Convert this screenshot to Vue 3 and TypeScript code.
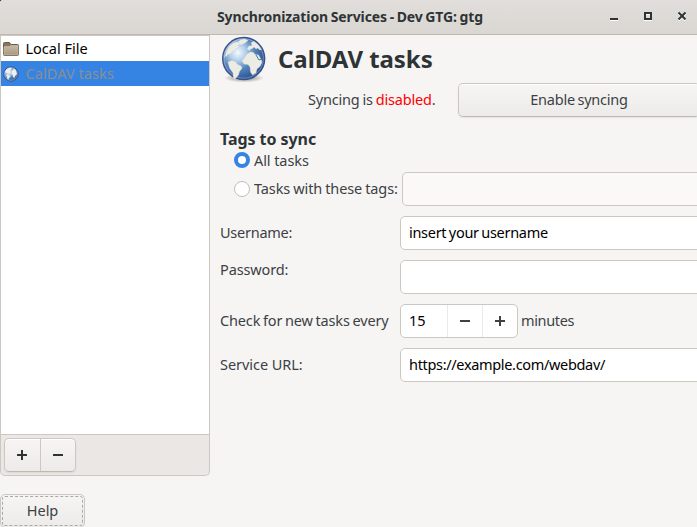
<script setup lang="ts">
import { ref } from 'vue'

type Scope = 'all' | 'tags'

const scope = ref<Scope>('all')
const tags = ref('')
const username = ref('insert your username')
const password = ref('')
const minutes = ref(15)
const serviceUrl = ref('https://example.com/webdav/')
</script>

<template>
  <svg class="defs" width="0" height="0" aria-hidden="true">
    <defs>
      <radialGradient id="ocean" cx="0.36" cy="0.36" r="0.64">
        <stop offset="0" stop-color="#f4f9fd" />
        <stop offset="0.3" stop-color="#b4cfea" />
        <stop offset="0.62" stop-color="#5584ba" />
        <stop offset="1" stop-color="#2b5795" />
      </radialGradient>
      <radialGradient id="shade">
        <stop offset="0" stop-color="#000" stop-opacity="0.5" />
        <stop offset="1" stop-color="#000" stop-opacity="0" />
      </radialGradient>
      <linearGradient id="folder" x1="0" y1="0" x2="0" y2="1">
        <stop offset="0" stop-color="#c6b9a4" />
        <stop offset="1" stop-color="#a79880" />
      </linearGradient>
      <symbol id="globe" viewBox="0 0 48 48">
        <ellipse cx="24" cy="43" rx="20" ry="4.500" fill="url(#shade)" />
        <circle cx="23.700" cy="23.500" r="21" fill="url(#ocean)" stroke="#39528c" stroke-width="1.400" />
        <g fill="#ecece4" stroke="#cfd4d3" stroke-width="0.4">
          <path d="M5.500 20l1-4 3-5 4-3 3-1 4 0 0 2-3 1.500 2 1.500-3 1-1 2.500-3 .5-2 3-3 .5-1 2-1.500-1-.5 2z" />
          <path d="M18 7l3-2.500 4-.5 3 1.500-3 2.500-4 2-1.500-1z" />
          <path d="M8 27l4-1.500 4 1.500 1 2 4 2 1.200 2-2.700 3.500-1 3.500-3.500 4-1.500-.5-.5-5.500-3.500-5z" />
          <path d="M27 14l2-3 3-.5-1-3 3-1 4 3 3.500 5-2 .5-1.500-2-2 1-2-2-1.500 1.500-2 .5-1 1.500z" />
          <path d="M25 22l2-3 3.500-2 3 .5 1.500 2 3.500.5 3 5 .5 2.500-2 4-3 2.500-1 4-3.500 2-2-3-.5-5-2-2.500-4-.5-2-3z" />
        </g>
        <path d="M36 20l3 5 3-1" fill="none" stroke="#4373ad" stroke-width="1" />
        <circle cx="23.700" cy="23.500" r="19.700" fill="none" stroke="#fff" stroke-opacity="0.3" />
      </symbol>
      <symbol id="globe-small" viewBox="0 0 16 16">
        <circle cx="8" cy="8" r="7.200" fill="url(#ocean)" stroke="#35568c" stroke-width="1" />
        <g fill="#eff0ec">
          <path d="M2 6l2-3 3-1.300 2 .8-2 1.500-1 2-2 1z" />
          <path d="M3 9l2-.5 2.500 1.700-1.200 1.600-1 2-1-1-.3-2z" />
          <path d="M9 5l2-2.500 2 2 1 3.500-1.500 1.500-1.300 2.500-1.200-1-.2-2L8.500 8z" />
        </g>
        <circle cx="8" cy="8" r="6.300" fill="none" stroke="#fff" stroke-opacity="0.45" stroke-width="0.8" />
      </symbol>
    </defs>
  </svg>

  <div class="window">
    <header class="titlebar">
      <h1>Synchronization Services - Dev GTG: gtg</h1>
      <div class="controls">
        <svg width="10" height="10" viewBox="0 0 10 10"><path d="M1 8h8v2H1z" /></svg>
        <svg width="10" height="10" viewBox="0 0 10 10"><path fill-rule="evenodd" d="M1 2h8v8H1zM3 4v4h4V4z" /></svg>
        <svg width="10" height="10" viewBox="0 0 10 10"><path class="cross" d="M1.500 2.500l7 7M8.500 2.500l-7 7" /></svg>
      </div>
    </header>

    <div class="body">
      <aside class="side">
        <ul class="backends">
          <li>
            <svg width="16" height="16" viewBox="0 0 16 16">
              <path d="M.5 13.500v-11q0-1 1-1h4.500q1 0 1.300 1l.3 1h7q.9 0 .9 1v9q0 1-1 1H1.500q-1 0-1-1z" fill="#86755d" stroke="#6d5e49" />
              <path d="M1 6.500q0-1 1-1h4.500l1-1H15v9q0 .5-.5.5h-13q-.5 0-.5-.5z" fill="url(#folder)" stroke="#d7ccba" stroke-width=".5" />
            </svg>
            <span>Local File</span>
          </li>
          <li class="selected">
            <svg width="16" height="16"><use href="#globe-small" /></svg>
            <span>CalDAV tasks</span>
          </li>
        </ul>
        <div class="toolbar">
          <div class="linked">
            <button type="button" aria-label="Add"><svg width="10" height="10" viewBox="0 0 10 10"><path d="M4 0h2v4h4v2H6v4H4V6H0V4h4z" /></svg></button>
            <button type="button" aria-label="Remove"><svg width="10" height="10" viewBox="0 0 10 10"><path d="M0 4h10v2H0z" /></svg></button>
          </div>
        </div>
        <button type="button" class="help"><span>Help</span></button>
      </aside>

      <main class="panel">
        <div class="heading">
          <svg width="48" height="48"><use href="#globe" /></svg>
          <h2>CalDAV tasks</h2>
        </div>

        <div class="status">
          <span class="state">Syncing is <em>disabled</em>.</span>
          <button type="button" class="enable">Enable syncing</button>
        </div>

        <h3>Tags to sync</h3>
        <label class="option first">
          <input v-model="scope" type="radio" value="all" />
          <span>All tasks</span>
        </label>
        <div class="option second">
          <input id="some" v-model="scope" type="radio" value="tags" />
          <label for="some">Tasks with these tags:</label>
          <input v-model="tags" class="entry" type="text" :disabled="scope === 'all'" />
        </div>

        <div class="fields">
          <label class="user">Username:</label>
          <input v-model="username" class="entry name" type="text" />
          <label class="pass">Password:</label>
          <input v-model="password" class="entry" type="password" />
          <label class="check">Check for new tasks every</label>
          <div class="period">
            <div class="spin">
              <span class="value">{{ minutes }}</span>
              <button type="button" aria-label="Less" @click="minutes--"><svg width="10" height="10" viewBox="0 0 10 10"><path d="M0 4h10v2H0z" /></svg></button>
              <button type="button" aria-label="More" @click="minutes++"><svg width="10" height="10" viewBox="0 0 10 10"><path d="M4 0h2v4h4v2H6v4H4V6H0V4h4z" /></svg></button>
            </div>
            <span class="unit">minutes</span>
          </div>
          <label class="service">Service URL:</label>
          <input v-model="serviceUrl" class="entry url" type="text" />
        </div>
      </main>
    </div>
  </div>
</template>

<style>
body {
  margin: 0;
  overflow: hidden;
  background: #f6f5f4;
}
</style>

<style scoped>
* {
  box-sizing: border-box;
}
.defs {
  position: absolute;
}
.window {
  display: flex;
  flex-direction: column;
  height: 527px;
  overflow: hidden;
  background: #f6f5f4;
  color: #3c4144;
  font-family: "Noto Sans", sans-serif;
  font-size: 14.5px;
  line-height: 20px;
  white-space: nowrap;
}
h1,
h2,
h3,
ul {
  margin: 0;
  padding: 0;
}
button,
input {
  margin: 0;
  padding: 0;
  font: inherit;
  color: inherit;
}
.titlebar {
  display: grid;
  grid-template-columns: 217px 1fr auto;
  align-items: center;
  flex: none;
  height: 35px;
  padding-right: 10px;
  border-bottom: 1px solid #bfb8b1;
  border-top-left-radius: 3px;
  background: linear-gradient(#e1dedb, #dad6d2);
  box-shadow: -3px -3px 0 3px #222;
}
.titlebar h1 {
  grid-column: 2;
  color: #2e3436;
  font-size: 14px;
  font-weight: 700;
  letter-spacing: -0.1px;
  word-spacing: -0.9px;
}
.controls {
  display: flex;
  gap: 24px;
  padding-bottom: 4px;
  fill: #2e3436;
}
.controls svg {
  display: block;
  filter: drop-shadow(0 1px 0 #fff);
}
.cross {
  stroke: #2e3436;
  stroke-width: 2;
}
.body {
  display: flex;
  flex: 1;
  min-height: 0;
}
.side {
  display: flex;
  flex-direction: column;
  flex: none;
  width: 210px;
}
.backends {
  flex: none;
  height: 400px;
  border: 1px solid #cdc7c2;
  background: #fff;
  color: #000;
  list-style: none;
}
.backends li {
  display: flex;
  align-items: center;
  gap: 6.500px;
  height: 25px;
  padding-left: 2px;
}
.backends span {
  padding-bottom: 2px;
}
.backends .selected {
  background: #3584e4;
  color: #8b8e8f;
  letter-spacing: 0.08px;
}
.toolbar {
  flex: none;
  height: 41px;
  padding: 3px;
  border: 1px solid #cdc7c2;
  border-top: 0;
  border-radius: 0 0 5px 5px;
  background: #ebe7e4;
}
.linked {
  display: flex;
  width: 72px;
  height: 34px;
  border: 1px solid #cdc7c2;
  border-bottom-color: #bfb8b1;
  border-radius: 5px;
  background: linear-gradient(#f6f5f4, #edebe9);
  box-shadow: inset 0 1px #fff, 0 1px 2px rgba(0, 0, 0, 0.07);
}
.linked button {
  display: grid;
  place-items: center;
  flex: 1;
  border: 0;
  background: none;
  fill: #2e3436;
}
.linked button + button {
  border-left: 1px solid #cdc7c2;
}
.help {
  flex: none;
  width: 85px;
  height: 34px;
  margin-top: 18px;
  padding: 1px;
  border: 1px solid #cdc7c2;
  border-radius: 5px;
  background: linear-gradient(#f6f5f4, #edebe9);
}
.help span {
  display: block;
  height: 30px;
  border: 1px dashed #a8aaa9;
  border-radius: 3px;
  line-height: 27px;
}
.panel {
  flex: none;
  width: 620px;
  padding-left: 10px;
}
.heading {
  display: flex;
  height: 48px;
  gap: 10px;
}
.heading h2 {
  color: #2e3436;
  font-size: 24px;
  font-weight: 700;
  line-height: 48px;
  letter-spacing: -0.05px;
}
.status {
  display: flex;
  align-items: center;
}
.state {
  width: 238px;
  padding-left: 88px;
  padding-bottom: 2px;
  letter-spacing: -0.2px;
  word-spacing: -0.6px;
}
.state em {
  color: #f00;
  font-style: normal;
}
.enable {
  width: 242px;
  height: 34px;
  padding-bottom: 2px;
  border: 1px solid #cdc7c2;
  border-bottom-color: #bfb8b1;
  border-radius: 5px;
  background: linear-gradient(#f6f5f4, #edebe9);
  box-shadow: inset 0 1px #fff, 0 1px 2px rgba(0, 0, 0, 0.07);
  letter-spacing: -0.25px;
  word-spacing: -0.8px;
}
h3 {
  margin-top: 12px;
  color: #2e3436;
  font-size: 16px;
  font-weight: 700;
  letter-spacing: -0.05px;
}
.option {
  display: flex;
  align-items: center;
  padding-left: 14px;
}
.first {
  height: 22px;
  letter-spacing: -0.08px;
}
.second {
  height: 34px;
  margin-top: 1px;
}
.second label {
  width: 148px;
  padding-bottom: 2px;
  letter-spacing: -0.09px;
  word-spacing: -0.7px;
}
input[type="radio"] {
  appearance: none;
  width: 16px;
  height: 16px;
  margin-right: 4px;
  border: 1px solid #c3bdb7;
  border-radius: 50%;
  background: #fff;
}
input[type="radio"]:checked {
  border: 4px solid #3584e4;
}
.entry {
  display: block;
  width: 420px;
  height: 34px;
  padding: 0 8px 2px;
  border: 1px solid #cdc7c2;
  border-radius: 5px;
  background: #fff;
  color: #000;
}
.entry:disabled {
  background: #faf9f8;
}
.fields {
  display: grid;
  grid-template-columns: 180px 420px;
  row-gap: 10px;
  align-items: center;
  margin-top: 10px;
}
.fields label {
  padding-bottom: 2px;
}
.user {
  letter-spacing: -0.25px;
}
.name {
  letter-spacing: -0.3px;
  word-spacing: -0.9px;
}
.fields .pass {
  align-self: start;
  margin-top: -1px;
  letter-spacing: -0.12px;
}
.check {
  letter-spacing: -0.15px;
  word-spacing: -0.9px;
}
.service {
  letter-spacing: -0.05px;
}
.period {
  display: flex;
  align-items: center;
  gap: 3px;
}
.spin {
  display: flex;
  width: 118px;
  height: 34px;
  border: 1px solid #cdc7c2;
  border-radius: 5px;
  background: #fff;
  color: #000;
}
.value {
  flex: 1;
  padding-left: 8px;
  line-height: 30px;
}
.spin button {
  display: grid;
  place-items: center;
  width: 35px;
  border: 0;
  border-left: 1px solid #ebe9e7;
  background: none;
  fill: #3c4144;
}
.unit {
  padding-bottom: 2px;
  letter-spacing: -0.35px;
}
.url {
  letter-spacing: -0.33px;
}
</style>
